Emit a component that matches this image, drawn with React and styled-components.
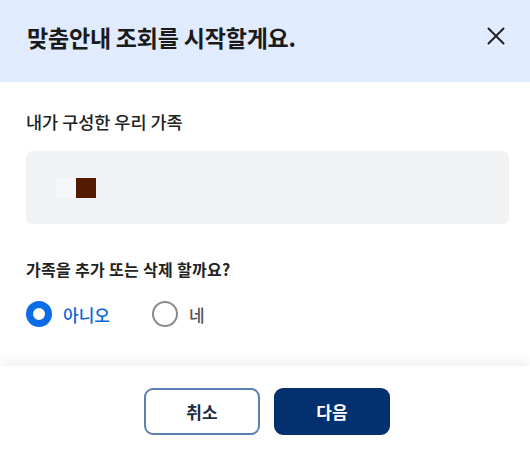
import React, { useState } from 'react';
import styled, { createGlobalStyle } from 'styled-components';

const GlobalStyle = createGlobalStyle`
  html, body {
    margin: 0;
    padding: 0;
    background: #ffffff;
  }
  body {
    font-family: "Noto Sans CJK KR", "Noto Sans", sans-serif;
    color: #1d1d1f;
  }
`;

const App = () => {
  const [answer, setAnswer] = useState('no');

  return (
    <>
      <GlobalStyle />
      <Modal>
        <Header>
          <Title>맞춤안내 조회를 시작할게요.</Title>
          <CloseButton aria-label="닫기">
            <svg width="18" height="18" viewBox="0 0 18 18">
              <path d="M1.5 1.5 L16.5 16.5 M16.5 1.5 L1.5 16.5" stroke="#222" strokeWidth="2" strokeLinecap="round" />
            </svg>
          </CloseButton>
        </Header>
        <Body>
          <Label>내가 구성한 우리 가족</Label>
          <FamilyBox>
            <Swatch $color="#f5f6f9" />
            <Swatch $color="#521b00" />
          </FamilyBox>
          <Question>가족을 추가 또는 삭제 할까요?</Question>
          <RadioRow>
            <RadioOption onClick={() => setAnswer('no')}>
              <RadioCircle $checked={answer === 'no'} />
              <RadioText $checked={answer === 'no'}>아니오</RadioText>
            </RadioOption>
            <RadioOption onClick={() => setAnswer('yes')}>
              <RadioCircle $checked={answer === 'yes'} />
              <RadioText $checked={answer === 'yes'}>네</RadioText>
            </RadioOption>
          </RadioRow>
        </Body>
        <Footer>
          <Button>취소</Button>
          <Button $primary>다음</Button>
        </Footer>
      </Modal>
    </>
  );
};

const Modal = styled.div`
  width: 530px;
  height: 452px;
  display: flex;
  flex-direction: column;
  background: #fff;
  overflow: hidden;
`;

const Header = styled.div`
  height: 82px;
  flex-shrink: 0;
  display: flex;
  align-items: center;
  justify-content: space-between;
  padding: 0 25px 0 27px;
  box-sizing: border-box;
  background: #e0ebfd;
`;

const Title = styled.h1`
  margin: 0;
  margin-top: -9px;
  font-size: 23px;
  font-weight: 700;
  letter-spacing: -0.2px;
  color: #1a1a1a;
`;

const CloseButton = styled.button`
  border: none;
  background: transparent;
  padding: 0;
  margin-top: -10px;
  display: flex;
  cursor: pointer;
`;

const Body = styled.div`
  flex: 1;
  display: flex;
  flex-direction: column;
  padding: 28px 21px 0 26px;
`;

const Label = styled.div`
  font-size: 17.5px;
  font-weight: 500;
  line-height: 24px;
  color: #222;
`;

const FamilyBox = styled.div`
  margin-top: 17px;
  height: 73px;
  border-radius: 6px;
  background: #f1f2f4;
  display: flex;
  align-items: center;
  padding-left: 30px;
`;

const Swatch = styled.span`
  width: 20px;
  height: 20px;
  background: ${(p) => p.$color};
`;

const Question = styled.div`
  margin-top: 34px;
  font-size: 16px;
  font-weight: 700;
  line-height: 22px;
  letter-spacing: 0.3px;
  color: #222;
`;

const RadioRow = styled.div`
  margin-top: 21px;
  display: flex;
  align-items: center;
  gap: 42px;
`;

const RadioOption = styled.label`
  display: flex;
  align-items: center;
  gap: 11px;
  cursor: pointer;
`;

const RadioCircle = styled.span`
  width: 26px;
  height: 26px;
  border-radius: 50%;
  box-sizing: border-box;
  border: ${(p) => (p.$checked ? '7px solid #0a6ce6' : '2px solid #8a8a8a')};
  background: #fff;
`;

const RadioText = styled.span`
  font-size: 17px;
  font-weight: 500;
  color: ${(p) => (p.$checked ? '#0a66e0' : '#555')};
`;

const Footer = styled.div`
  height: 86px;
  flex-shrink: 0;
  display: flex;
  justify-content: center;
  align-items: flex-start;
  gap: 14px;
  padding: 22px 0 0 4px;
  box-sizing: border-box;
  box-shadow: 0 -6px 12px rgba(0, 0, 0, 0.06);
  background: #fff;
`;

const Button = styled.button`
  width: 116px;
  height: 47px;
  border-radius: 9px;
  box-sizing: border-box;
  font-family: inherit;
  font-size: 17px;
  font-weight: 700;
  cursor: pointer;
  border: 2px solid ${(p) => (p.$primary ? '#03306f' : '#5c7fb3')};
  background: ${(p) => (p.$primary ? '#03306f' : '#fff')};
  color: ${(p) => (p.$primary ? '#fff' : '#1c2b45')};
`;

export default App;
